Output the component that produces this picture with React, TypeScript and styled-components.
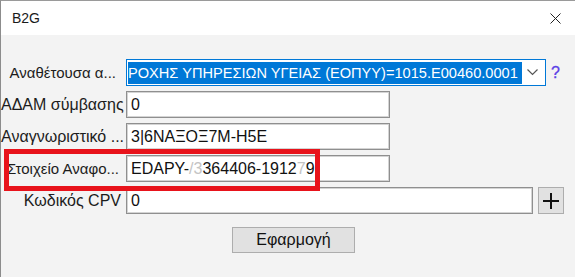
import * as React from "react";
import styled, { createGlobalStyle } from "styled-components";

const GlobalStyle = createGlobalStyle`
	html, body {
		margin: 0;
		padding: 0;
		width: 575px;
		height: 277px;
		overflow: hidden;
		background: #f3f3f3;
		font-family: "Liberation Sans", Arial, sans-serif;
	}
`;

const Window = styled.div`
	position: relative;
	width: 575px;
	height: 277px;
	box-sizing: border-box;
	border-left: 1px solid #8c8c8c;
	border-top: 1px solid #9a9a9a;
	background: #f3f3f3;
	display: flex;
	flex-direction: column;
`;

const TitleBar = styled.div`
	height: 34px;
	background: #ffffff;
	display: flex;
	align-items: center;
	justify-content: space-between;
	padding: 0 14px 0 11px;
	font-size: 14px;
	color: #1a1a1a;
`;

const Body = styled.div`
	display: flex;
	flex-direction: column;
	gap: 5px;
	padding-top: 24px;
`;

const Row = styled.div`
	display: flex;
	align-items: center;
	height: 27px;
	gap: 5px;
`;

const Label = styled.div<{ $inset?: number; $size?: number }>`
	width: 120px;
	text-align: right;
	font-size: ${(p) => p.$size ?? 16}px;
	color: #1c1c1c;
	white-space: nowrap;
	padding-right: ${(p) => p.$inset ?? 0}px;
	box-sizing: border-box;
`;

const Input = styled.div<{ $width: number }>`
	width: ${(p) => p.$width}px;
	height: 27px;
	box-sizing: border-box;
	background: #ffffff;
	border: 1px solid #8f8f8f;
	box-shadow: inset 0 0 0 1px #d4d4d4;
	display: flex;
	align-items: center;
	padding-left: 4px;
	font-size: 16px;
	color: #111;
	white-space: nowrap;
	overflow: hidden;
`;

const Combo = styled.div`
	width: 420px;
	height: 27px;
	box-sizing: border-box;
	background: #ffffff;
	border: 1px solid #0078d7;
	display: flex;
	align-items: center;
	padding: 0 2px 0 1px;
`;

const Selected = styled.div`
	width: 394px;
	height: 22px;
	background: #0078d7;
	color: #ffffff;
	font-size: 14.6px;
	display: flex;
	align-items: center;
	white-space: nowrap;
	overflow: hidden;
`;

const Chevron = styled.div`
	flex: 1;
	display: flex;
	justify-content: center;
	align-items: center;
`;

const Help = styled.span`
	font-size: 16px;
	color: #5b3fe6;
	-webkit-text-stroke: 0.3px #5b3fe6;
`;

const Faded = styled.span`
	color: #c4c4c4;
`;

const SquareButton = styled.div`
	width: 26px;
	height: 27px;
	box-sizing: border-box;
	background: #e1e1e1;
	border: 1px solid #adadad;
	display: flex;
	align-items: center;
	justify-content: center;
`;

const ButtonRow = styled.div`
	display: flex;
	padding: 13px 0 0 231px;
`;

const Button = styled.div`
	width: 123px;
	height: 26px;
	box-sizing: border-box;
	background: #e1e1e1;
	border: 1px solid #adadad;
	display: flex;
	align-items: center;
	justify-content: center;
	font-size: 16px;
	color: #111;
`;

const Highlight = styled.div`
	position: absolute;
	left: 3px;
	top: 148px;
	width: 316px;
	height: 42px;
	box-sizing: border-box;
	border: 5px solid #e8131b;
	pointer-events: none;
`;

export default function App() {
	return (
		<>
			<GlobalStyle />
			<Window>
				<TitleBar>
					<span>B2G</span>
					<svg width="11" height="11" viewBox="0 0 11 11">
						<path d="M0.5 0.5 L10.5 10.5 M10.5 0.5 L0.5 10.5" stroke="#222" strokeWidth="1" />
					</svg>
				</TitleBar>
				<Body>
					<Row>
						<Label $inset={5} $size={15}>Αναθέτουσα α...</Label>
						<Combo>
							<Selected>ΡΟΧΗΣ ΥΠΗΡΕΣΙΩΝ ΥΓΕΙΑΣ (ΕΟΠΥΥ)=1015.Ε00460.0001</Selected>
							<Chevron>
								<svg width="11" height="7" viewBox="0 0 11 7">
									<path d="M0.5 0.5 L5.5 5.5 L10.5 0.5" stroke="#555" strokeWidth="1.2" fill="none" />
								</svg>
							</Chevron>
						</Combo>
						<Help>?</Help>
					</Row>
					<Row>
						<Label>ΑΔΑΜ σύμβασης</Label>
						<Input $width={264}>0</Input>
					</Row>
					<Row>
						<Label>Αναγνωριστικό ...</Label>
						<Input $width={264}>3|6ΝΑΞΟΞ7Μ-Η5Ε</Input>
					</Row>
					<Row>
						<Label $inset={2} $size={15}>Στοιχείο Αναφο...</Label>
						<Input $width={264}>
							EDAPY-<Faded>/3</Faded>364406-1912<Faded>7</Faded>9
						</Input>
					</Row>
					<Row>
						<Label>Κωδικός CPV</Label>
						<Input $width={407}>0</Input>
						<SquareButton>
							<svg width="16" height="16" viewBox="0 0 16 16">
								<path d="M8 0 V16 M0 8 H16" stroke="#111" strokeWidth="2" />
							</svg>
						</SquareButton>
					</Row>
				</Body>
				<ButtonRow>
					<Button>Εφαρμογή</Button>
				</ButtonRow>
				<Highlight />
			</Window>
		</>
	);
}
